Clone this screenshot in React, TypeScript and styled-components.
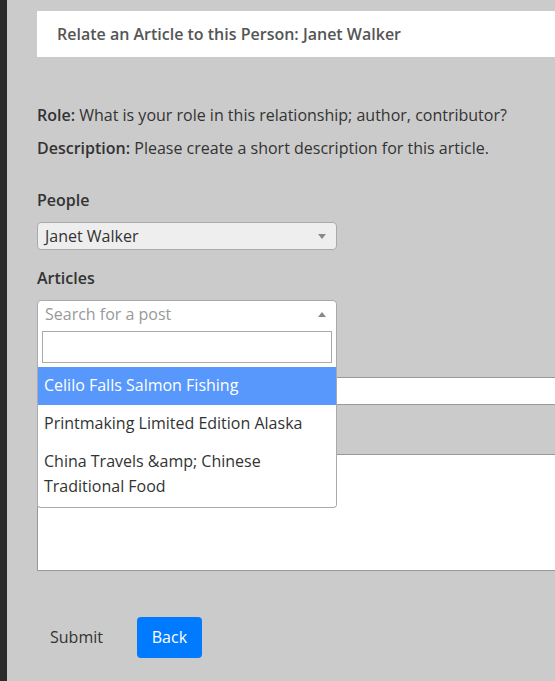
import React from "react";
import styled, { createGlobalStyle } from "styled-components";

const Global = createGlobalStyle`
  html, body { margin: 0; padding: 0; background: #cbcbcb; }
  body { font-family: "Open Sans", "Liberation Sans", sans-serif; color: #333; font-size: 16px; }
  * { box-sizing: border-box; }
`;

const Page = styled.div`
  display: flex;
  min-height: 681px;
  width: 555px;
  overflow: hidden;
`;

const Strip = styled.div`
  width: 7px;
  flex: 0 0 7px;
  background: #2b2b2b;
`;

const Main = styled.main`
  flex: 1;
  padding: 11px 0 0 30px;
  min-width: 0;
`;

const Header = styled.div`
  background: #fff;
  height: 46px;
  display: flex;
  align-items: center;
  padding-left: 20px;
  margin-right: -40px;
  font-size: 16px;
  font-weight: 600;
  color: #555;
`;

const Help = styled.p`
  margin: 0;
  line-height: 24px;
  color: #333;
  &:first-of-type { margin-top: 46px; }
  & + & { margin-top: 9px; }
  b { font-weight: 600; }
`;

const Label = styled.div`
  font-weight: 600;
  color: #333;
  line-height: 24px;
  margin-top: ${(p: { $top: number }) => p.$top}px;
`;

const SelectWrap = styled.div`
  position: relative;
  width: 300px;
  margin-top: 10px;
`;

const Select = styled.div<{ $open?: boolean }>`
  height: 28px;
  border: 1px solid #aaa;
  border-radius: ${(p) => (p.$open ? "4px 4px 0 0" : "4px")};
  background: ${(p) => (p.$open ? "#fff" : "#eee")};
  display: flex;
  align-items: center;
  padding: 0 8px 0 7px;
  color: ${(p) => (p.$open ? "#999" : "#333")};
  line-height: 26px;
`;

const SelectText = styled.span`
  flex: 1;
`;

const Caret = styled.span<{ $up?: boolean }>`
  width: 0;
  height: 0;
  border-left: 4px solid transparent;
  border-right: 4px solid transparent;
  ${(p) => (p.$up ? "border-bottom: 5px solid #888;" : "border-top: 5px solid #888;")}
  margin-right: 2px;
`;

const Dropdown = styled.div`
  position: absolute;
  left: 0;
  top: 27px;
  width: 300px;
  background: #fff;
  border: 1px solid #aaa;
  border-top: none;
  border-radius: 0 0 4px 4px;
  z-index: 5;
  padding-bottom: 1px;
`;

const SearchBox = styled.div`
  padding: 4px;
`;

const SearchInput = styled.div`
  height: 32px;
  border: 1px solid #aaa;
  background: #fff;
`;

const Option = styled.div<{ $active?: boolean }>`
  padding: 6px 6px 7px;
  line-height: 25px;
  background: ${(p) => (p.$active ? "#5897fb" : "#fff")};
  color: ${(p) => (p.$active ? "#fff" : "#333")};
`;

const Field = styled.div<{ $h: number; $top: number }>`
  height: ${(p) => p.$h}px;
  margin-top: ${(p) => p.$top}px;
  margin-right: -40px;
  background: #fff;
  border: 1px solid #999;
`;

const Actions = styled.div`
  display: flex;
  align-items: center;
  gap: 21px;
  margin-top: 45px;
`;

const TextButton = styled.button`
  font: inherit;
  font-size: 16px;
  border: none;
  background: transparent;
  color: #333;
  padding: 10px 13px;
  cursor: pointer;
`;

const PrimaryButton = styled.button`
  font: inherit;
  font-size: 16px;
  border: none;
  background: #007bff;
  color: #fff;
  width: 65px;
  height: 41px;
  border-radius: 4px;
  cursor: pointer;
`;

export default function App() {
  return (
    <>
      <Global />
      <Page>
        <Strip />
        <Main>
          <Header>Relate an Article to this Person: Janet Walker</Header>
          <Help>
            <b>Role:</b> What is your role in this relationship; author, contributor?
          </Help>
          <Help>
            <b>Description:</b> Please create a short description for this article.
          </Help>
          <Label $top={28}>People</Label>
          <SelectWrap>
            <Select>
              <SelectText>Janet Walker</SelectText>
              <Caret />
            </Select>
          </SelectWrap>
          <Label $top={16}>Articles</Label>
          <SelectWrap>
            <Select $open>
              <SelectText>Search for a post</SelectText>
              <Caret $up />
            </Select>
            <Dropdown>
              <SearchBox>
                <SearchInput />
              </SearchBox>
              <Option $active>Celilo Falls Salmon Fishing</Option>
              <Option>Printmaking Limited Edition Alaska</Option>
              <Option>China Travels &amp;amp; Chinese Traditional Food</Option>
            </Dropdown>
          </SelectWrap>
          <Field $h={28} $top={49} />
          <Field $h={117} $top={49} />
          <Actions>
            <TextButton>Submit</TextButton>
            <PrimaryButton>Back</PrimaryButton>
          </Actions>
        </Main>
      </Page>
    </>
  );
}
